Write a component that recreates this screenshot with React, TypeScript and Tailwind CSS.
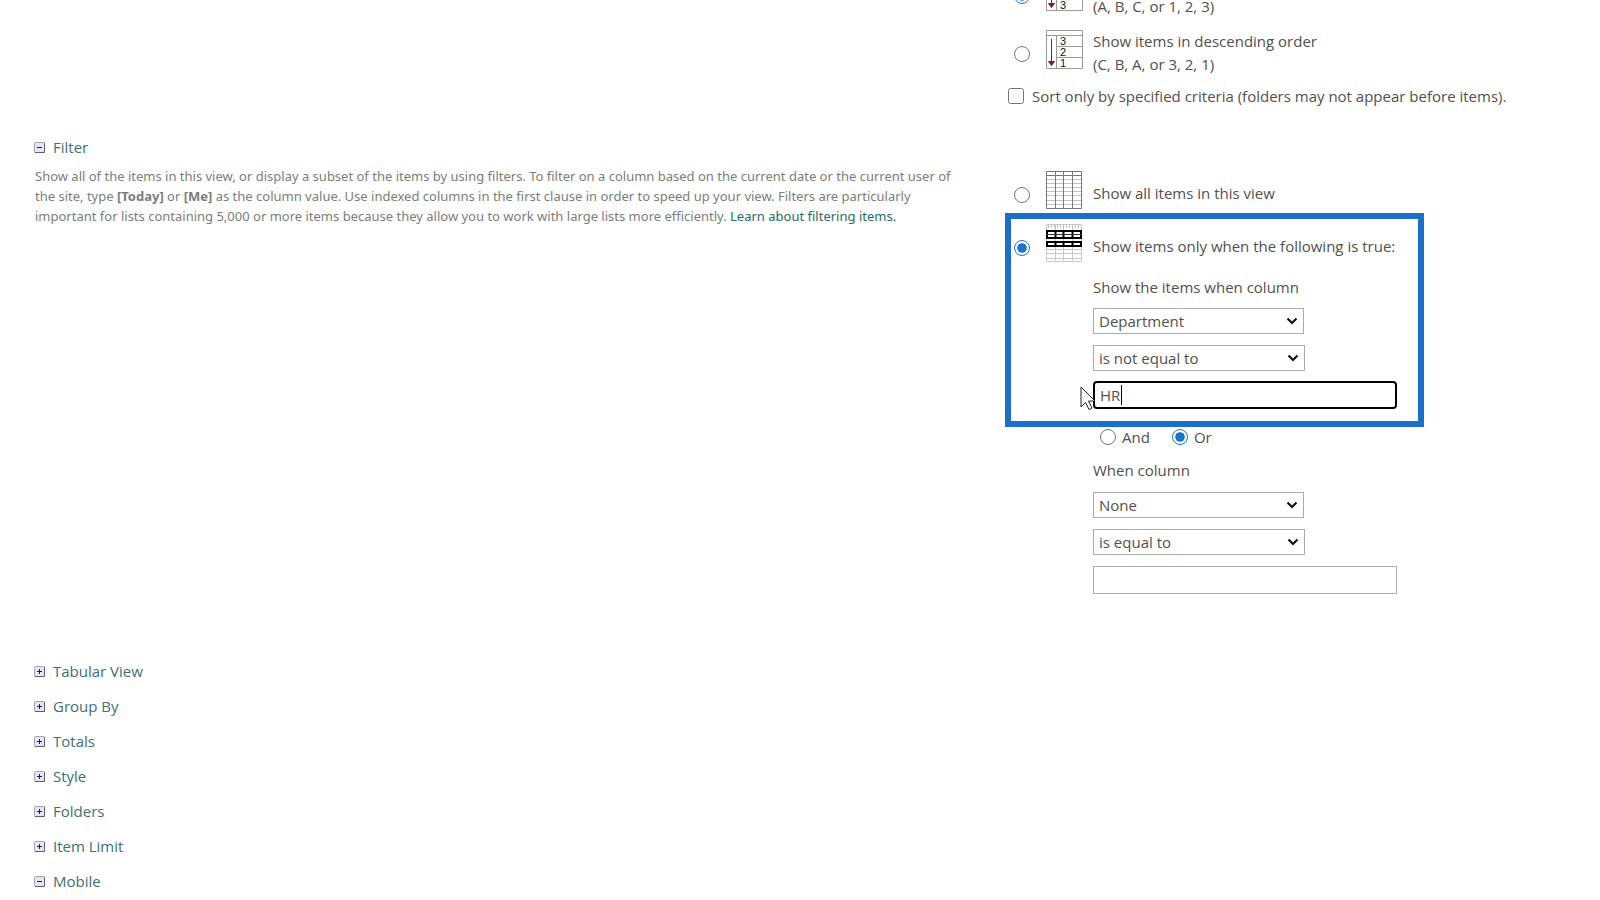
import { useState } from 'react'
import type { ReactNode } from 'react'

const SECTIONS = ['Tabular View', 'Group By', 'Totals', 'Style', 'Folders', 'Item Limit', 'Mobile']

function ToggleIcon({ open }: { open: boolean }) {
  return (
    <svg width="11" height="11" viewBox="0 0 11 11" className="shrink-0">
      <rect x="0.5" y="0.5" width="10" height="10" rx="1" fill="#e6e6f0" stroke="#a3a3b0" />
      <path d="M1 10.5h9.5V1" fill="none" stroke="#5c5c78" />
      <path d="M3 5.5h5" stroke="#1c1c44" />
      {!open && <path d="M5.5 3v5" stroke="#1c1c44" />}
    </svg>
  )
}

function SectionHeader({ title, open, onToggle }: { title: string; open: boolean; onToggle: () => void }) {
  return (
    <h3>
      <button type="button" aria-expanded={open} onClick={onToggle} className="flex items-center gap-2 leading-5 text-[#3f7070]">
        <ToggleIcon open={open} />
        {title}
      </button>
    </h3>
  )
}

function SortIcon({ order }: { order: string[] }) {
  return (
    <svg width="37" height="39" viewBox="0 0 37 39" className="block">
      <path d="M0.5 0.5h36v38h-36zM0.5 5.5h36M10.5 5.5v33M10.5 16.5h26M10.5 27.5h26" fill="none" stroke="#9a9a9a" />
      <path d="M5.5 9v25" stroke="#6b2437" />
      <path d="M2.5 31.5h6l-3 4z" fill="#7c1d36" stroke="#7c1d36" />
      {order.map((n, i) => (
        <text key={n} x="14" y={15 + i * 11} fontSize="11" fontFamily="Liberation Sans, sans-serif" fill="#111">{n}</text>
      ))}
    </svg>
  )
}

function AllItemsIcon() {
  return (
    <svg width="36" height="38" viewBox="0 0 36 38" className="block">
      <path d="M1 8.5h34M1 12.5h34M1 16.5h34M1 20.5h34M1 24.5h34M1 29.5h34M1 33.5h34" stroke="#c4c4c4" />
      <path d="M0.5 0.5h35v37h-35zM0.5 4.5h35M9.5 0.5v37M17.5 0.5v37M26.5 0.5v37" fill="none" stroke="#777" />
    </svg>
  )
}

function FilteredItemsIcon() {
  return (
    <svg width="36" height="38" viewBox="0 0 36 38" className="block">
      <path d="M0.5 0.5h35v37h-35zM9.5 0v37M17.5 0v37M26.5 0v37M0 25.5h36M0 29.5h36M0 34.5h36" fill="none" stroke="#c8c8c8" />
      <path d="M2 2.5h32" stroke="#bbb" strokeWidth="3" strokeDasharray="1 2" />
      <path d="M1 7h34v7H1zM1 18h34v4H1z" fill="#fff" stroke="#000" strokeWidth="2" />
      <path d="M9.5 6v9M17.5 6v9M26.5 6v9M9.5 17v6M17.5 17v6M26.5 17v6" stroke="#000" strokeWidth="2" />
      <path d="M1 10.5h34" stroke="#333" />
    </svg>
  )
}

function PointerIcon() {
  return (
    <svg width="16" height="25" viewBox="0 0 16 25" className="absolute -left-[13px] top-[5px]">
      <path d="M1 1v20l4.5-4.5 3.5 7 3-1.5-3.5-7H15z" fill="#fff" stroke="#222" strokeLinejoin="round" />
    </svg>
  )
}

type OptionProps = {
  name: string
  icon: ReactNode
  checked: boolean
  onChange: () => void
  textClass?: string
  children: ReactNode
}

function Option({ name, icon, checked, onChange, textClass, children }: OptionProps) {
  return (
    <label className="flex items-start pl-[6px]">
      <input type="radio" name={name} checked={checked} onChange={onChange} className="mt-4 size-4 shrink-0 accent-[#1a73cc]" />
      <span className="ml-4 mr-[11px] w-9 shrink-0">{icon}</span>
      <span className={textClass}>{children}</span>
    </label>
  )
}

function Choice({ label, value, options, className }: { label: string; value: string; options: string[]; className: string }) {
  return (
    <div className={`relative ${className}`}>
      <select aria-label={label} defaultValue={value} className="block h-[26px] w-full appearance-none border border-[#ababab] bg-white pl-[5px]">
        {options.map(o => <option key={o}>{o}</option>)}
      </select>
      <svg width="12" height="8" viewBox="0 0 12 8" className="pointer-events-none absolute right-[6px] top-[9px]">
        <path d="M1.5 1.5L6 6l4.5-4.5" fill="none" stroke="#111" strokeWidth="2.2" />
      </svg>
    </div>
  )
}

const COLUMNS = ['None', 'Department', 'Title', 'Created', 'Modified']
const OPERATORS = ['is equal to', 'is not equal to', 'is greater than', 'is less than', 'contains']

export default function App() {
  const [order, setOrder]   = useState('asc')
  const [filter, setFilter] = useState('some')
  const [join, setJoin]     = useState('or')
  const [value, setValue]   = useState('HR')
  const [filterOpen, setFilterOpen] = useState(true)
  const [open, setOpen]     = useState<string[]>(['Mobile'])

  function toggle(title: string) {
    setOpen(open.includes(title) ? open.filter(t => t !== title) : [...open, title])
  }

  return (
    <main className="-mt-7 overflow-hidden bg-white font-['Open_Sans','Noto_Sans',sans-serif] text-[15px] text-[#505050]">
      <section className="ml-[63%]">
        <div className="flex flex-col gap-3 leading-[23px]">
          <Option name="order" icon={<SortIcon order={['1', '2', '3']} />} checked={order === 'asc'} onChange={() => setOrder('asc')}>
            Show items in ascending order<br />(A, B, C, or 1, 2, 3)
          </Option>
          <Option name="order" icon={<SortIcon order={['3', '2', '1']} />} checked={order === 'desc'} onChange={() => setOrder('desc')}>
            Show items in descending order<br />(C, B, A, or 3, 2, 1)
          </Option>
        </div>
        <label className="mt-[10px] flex items-center gap-2 leading-5">
          <input type="checkbox" className="size-4" />
          Sort only by specified criteria (folders may not appear before items).
        </label>
      </section>

      <section className="mt-[31px]">
        <div className="pl-[34px]">
          <SectionHeader title="Filter" open={filterOpen} onToggle={() => setFilterOpen(!filterOpen)} />
        </div>
        {filterOpen && (
          <div className="mt-[9px] grid grid-cols-[63fr_37fr]">
            <p className="pl-[35px] pr-11 font-['Noto_Sans','Open_Sans',sans-serif] text-[13px] leading-5 text-[#7c7c7c]">
              Show all of the items in this view, or display a subset of the items by using filters. To filter on a column based on the current date or the current user of the site, type <b>[Today]</b> or <b>[Me]</b> as the column value. Use indexed columns in the first clause in order to speed up your view. Filters are particularly important for lists containing 5,000 or more items because they allow you to work with large lists more efficiently. <a href="#learn" className="text-[#2a6a6a]">Learn about filtering items.</a>
            </p>

            <div className="pt-[5px] leading-5">
              <Option name="filter" icon={<AllItemsIcon />} checked={filter === 'all'} onChange={() => setFilter('all')} textClass="mt-3">
                Show all items in this view
              </Option>

              <div className="relative mt-[15px]">
                <div className="pointer-events-none absolute -left-[3px] -top-[11px] h-[214px] w-[419px] border-6 border-[#1a70c8]" />
                <Option name="filter" icon={<FilteredItemsIcon />} checked={filter === 'some'} onChange={() => setFilter('some')} textClass="mt-3">
                  Show items only when the following is true:
                </Option>

                <div className="pl-[85px]">
                  <p className="mt-[15px]">Show the items when column</p>
                  <Choice label="First column" value="Department" options={COLUMNS} className="mt-[11px] w-[211px]" />
                  <Choice label="First operator" value="is not equal to" options={OPERATORS} className="mt-[11px] w-[212px]" />
                  <div className="relative mt-[10px] w-[304px]">
                    <input
                      type="text"
                      aria-label="First value"
                      value={value}
                      onChange={e => setValue(e.target.value)}
                      className="block h-7 w-full rounded-[4px] border-2 border-black px-[5px] caret-transparent outline-none"
                    />
                    <span className="absolute left-7 top-1 h-5 w-px bg-black" />
                    <PointerIcon />
                  </div>

                  <div className="mt-[18px] flex items-center gap-[22px] pl-[7px]">
                    <label className="flex items-center gap-[6px]">
                      <input type="radio" name="join" checked={join === 'and'} onChange={() => setJoin('and')} className="size-4 accent-[#1a73cc]" />
                      And
                    </label>
                    <label className="flex items-center gap-[6px]">
                      <input type="radio" name="join" checked={join === 'or'} onChange={() => setJoin('or')} className="size-4 accent-[#1a73cc]" />
                      Or
                    </label>
                  </div>

                  <p className="mt-[13px]">When column</p>
                  <Choice label="Second column" value="None" options={COLUMNS} className="mt-3 w-[211px]" />
                  <Choice label="Second operator" value="is equal to" options={OPERATORS} className="mt-[11px] w-[212px]" />
                  <input type="text" aria-label="Second value" className="mt-[11px] block h-7 w-[304px] border border-[#ababab] px-[5px]" />
                </div>
              </div>
            </div>
          </div>
        )}
      </section>

      <div className="mt-[67px] flex flex-col gap-[15px] pl-[34px]">
        {SECTIONS.map(title => (
          <SectionHeader key={title} title={title} open={open.includes(title)} onToggle={() => toggle(title)} />
        ))}
      </div>
    </main>
  )
}
